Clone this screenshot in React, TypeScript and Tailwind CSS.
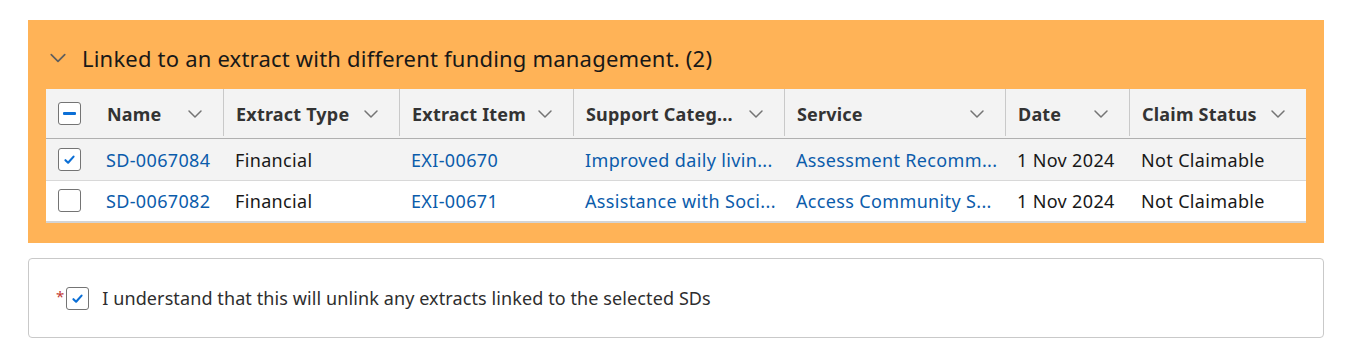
import React from "react";

const Chevron = ({ className = "" }: { className?: string }) => (
  <svg viewBox="0 0 16 16" className={className} fill="none" stroke="currentColor" strokeWidth="1.5" strokeLinecap="round" strokeLinejoin="round">
    <path d="M2 5 L8 11 L14 5" />
  </svg>
);

const Check = () => (
  <svg viewBox="0 0 16 16" className="w-[13px] h-[13px]" fill="none" stroke="#0b6fd6" strokeWidth="2.6" strokeLinecap="round" strokeLinejoin="round">
    <path d="M3 8.8 L6.3 12 L13 4.5" />
  </svg>
);

const Box = ({ state }: { state: "checked" | "empty" | "mixed" }) => (
  <div className="w-[23px] h-[23px] rounded-[3px] border border-[#747474] bg-white flex items-center justify-center">
    {state === "checked" && <Check />}
    {state === "mixed" && <div className="w-[13px] h-[3px] bg-[#0b6fd6] rounded-[1px]" />}
  </div>
);

const cols = [
  { label: "Name", w: 129 },
  { label: "Extract Type", w: 176 },
  { label: "Extract Item", w: 174 },
  { label: "Support Categ...", w: 211 },
  { label: "Service", w: 221 },
  { label: "Date", w: 124 },
  { label: "Claim Status", w: 177 },
];

type Cell = { t: string; link?: boolean };
const rows: { checked: boolean; bg: string; cells: Cell[] }[] = [
  {
    checked: true,
    bg: "bg-[#f3f3f3]",
    cells: [
      { t: "SD-0067084", link: true },
      { t: "Financial" },
      { t: "EXI-00670", link: true },
      { t: "Improved daily livin...", link: true },
      { t: "Assessment Recomm...", link: true },
      { t: "1 Nov 2024" },
      { t: "Not Claimable" },
    ],
  },
  {
    checked: false,
    bg: "bg-white",
    cells: [
      { t: "SD-0067082", link: true },
      { t: "Financial" },
      { t: "EXI-00671", link: true },
      { t: "Assistance with Soci...", link: true },
      { t: "Access Community S...", link: true },
      { t: "1 Nov 2024" },
      { t: "Not Claimable" },
    ],
  },
];

export default function App() {
  return (
    <div
      className="w-[1350px] h-[352px] bg-white pt-[20px] pl-[28px] pr-[26px] flex flex-col gap-[15px]"
      style={{ fontFamily: '"Noto Sans", "Open Sans", sans-serif' }}
    >
      <div className="bg-[#ffb357] pt-[20px] pb-[20px] px-[18px] flex flex-col">
        <div className="flex items-center h-[36px] mb-[13px]">
          <Chevron className="w-[18px] h-[18px] text-[#5e5e5e] ml-[3px] mr-[15px]" />
          <span className="text-[22px] leading-none text-[#181818] tracking-[0.2px]">
            Linked to an extract with different funding management. (2)
          </span>
        </div>
        <table className="table-fixed w-[1260px] border-collapse text-[18px]">
          <colgroup>
            <col style={{ width: 48 }} />
            {cols.map((c) => (
              <col key={c.label} style={{ width: c.w }} />
            ))}
          </colgroup>
          <thead>
            <tr className="bg-[#f3f3f3] h-[49px] border-b border-[#b0b0b0]">
              <th className="p-0 pl-[12px] align-middle">
                <Box state="mixed" />
              </th>
              {cols.map((c, i) => (
                <th key={c.label} className="p-0 pt-[2px] align-middle relative">
                  {i > 0 && <div className="absolute left-0 top-0 bottom-[2px] w-px bg-[#c9c9c9]" />}
                  <div className="flex items-center justify-between pl-[13px] pr-[20px]">
                    <span className="font-bold text-[#333333] whitespace-nowrap tracking-[0.2px]">{c.label}</span>
                    <Chevron className="w-[16px] h-[16px] text-[#747474] shrink-0 ml-2" />
                  </div>
                </th>
              ))}
            </tr>
          </thead>
          <tbody>
            {rows.map((r, ri) => (
              <tr key={ri} className={`${r.bg} h-[42px] ${ri === 0 ? "border-b border-[#d8d8d8]" : "border-b-2 border-[#d4d4d4]"}`}>
                <td className="p-0 pl-[12px] align-middle">
                  <Box state={r.checked ? "checked" : "empty"} />
                </td>
                {r.cells.map((c, ci) => (
                  <td
                    key={ci}
                    className={`p-0 pt-[2px] pl-[12px] pr-[2px] align-middle whitespace-nowrap tracking-[0.35px] ${
                      c.link ? "text-[#0b5cab]" : "text-[#181818]"
                    }`}
                  >
                    {c.t}
                  </td>
                ))}
              </tr>
            ))}
          </tbody>
        </table>
      </div>
      <div className="h-[80px] border border-[#c9c9c9] rounded-[4px] flex items-center pl-[27px]">
        <span className="text-[#c23934] text-[15px] self-start mt-[26px] mr-[2px]">*</span>
        <Box state="checked" />
        <span className="ml-[13px] text-[18px] text-[#2e2e2e] tracking-[0.1px]">
          I understand that this will unlink any extracts linked to the selected SDs
        </span>
      </div>
    </div>
  );
}
